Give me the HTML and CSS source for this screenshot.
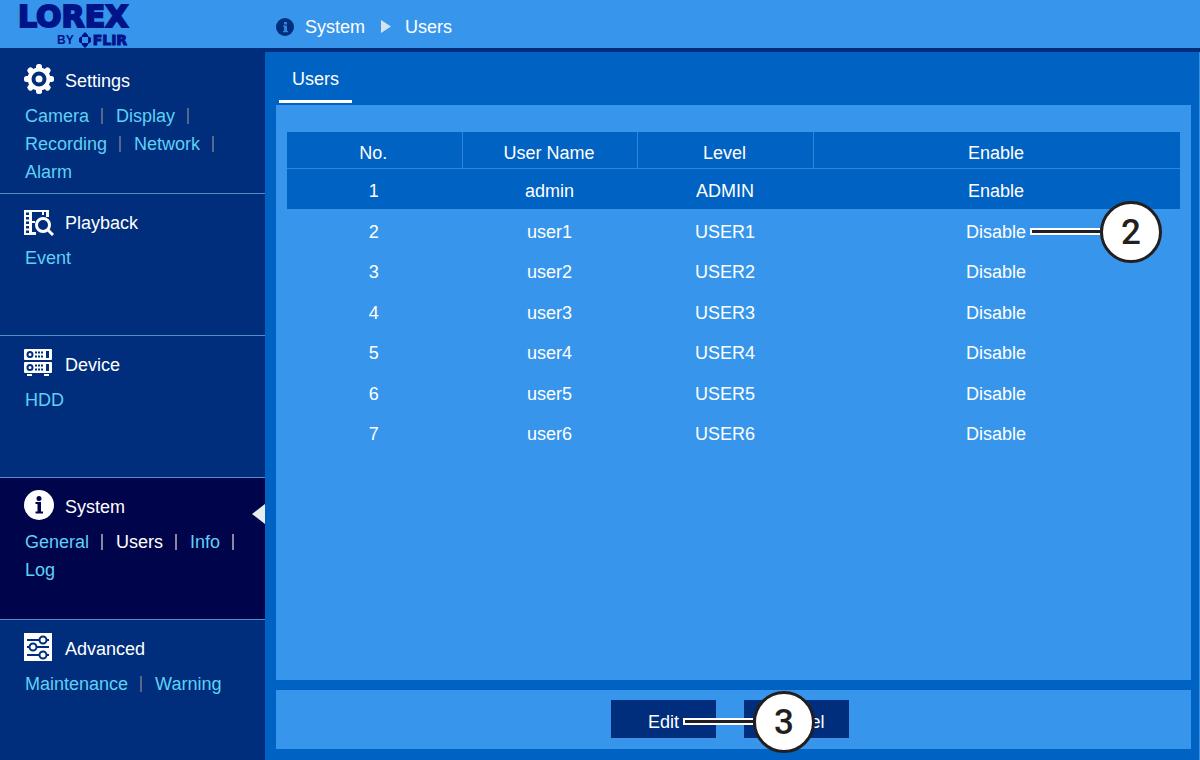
FILE: index.html
```html
<!DOCTYPE html>
<html lang="en">
<head>
  <meta charset="utf-8">
  <title>System - Users</title>
  <link rel="stylesheet" href="styles.css">
</head>
<body>
  <header class="topbar">
    <div class="logo">
      <div class="logo-name">LOREX</div>
      <div class="logo-by">
        <span class="by">BY</span>
        <svg width="12" height="16" viewBox="0 0 12 16">
          <path fill="#00148a" d="M6 0L9 3V5H3V3ZM6 16L3 13V11H9V13ZM0 6L3 4V12L0 10ZM12 6L9 4V12L12 10Z"/>
          <circle cx="6" cy="8" r="3" fill="#3796ec"/>
        </svg>
        <span class="flir">FLIR</span>
      </div>
    </div>
    <div class="crumbs">
      <svg width="18" height="18" viewBox="0 0 18 18">
        <circle cx="9" cy="9" r="9" fill="#002e7c"/>
        <path fill="#2f86dc" d="M8 4h3v2.500H8zM7 7.500h4V13h1v1.200H7V13h1V8.700H7z"/>
      </svg>
      <a href="#">System</a>
      <svg class="crumb-arrow" width="10" height="13" viewBox="0 0 10 13">
        <path fill="#d5e2ee" d="M0 0L10 6.500L0 13z"/>
      </svg>
      <a href="#">Users</a>
    </div>
  </header>

  <div class="layout">
    <nav class="sidebar">
      <section class="menu">
        <h2 class="menu-title">
          <svg width="30" height="30" viewBox="0 0 30 30">
            <g fill="#fff">
              <circle cx="15" cy="15" r="11.500"/>
              <g id="teeth">
                <rect x="12" y="0" width="6" height="30" rx="2.500"/>
                <rect x="0" y="12" width="30" height="6" rx="2.500"/>
              </g>
              <use href="#teeth" transform="rotate(45 15 15)"/>
            </g>
            <circle cx="15" cy="15" r="5.500" fill="none" stroke="#002e7c" stroke-width="4"/>
          </svg>
          <span>Settings</span>
        </h2>
        <ul class="links">
          <li><a href="#">Camera</a></li>
          <li><a href="#">Display</a></li>
          <li><a href="#">Recording</a></li>
          <li><a href="#">Network</a></li>
          <li><a href="#">Alarm</a></li>
        </ul>
      </section>

      <section class="menu">
        <h2 class="menu-title">
          <svg width="30" height="30" viewBox="0 0 30 30">
            <path fill="#fff" d="M0 4H25V11H22V6H8V15H11V17H8V26H12V29H0z"/>
            <path fill="#002e7c" d="M2 6.500h3v2.500H2zM2 11h3v2.500H2zM2 15.500h3V18H2zM2 20h3v2.500H2zM2 24.500h3V27H2z"/>
            <path fill="#fff" d="M18 6h2v3h-2z"/>
            <circle cx="19" cy="19" r="6.500" fill="#002e7c" stroke="#fff" stroke-width="3"/>
            <path d="M24 24L29 29" stroke="#fff" stroke-width="3"/>
          </svg>
          <span>Playback</span>
        </h2>
        <ul class="links">
          <li><a href="#">Event</a></li>
        </ul>
      </section>

      <section class="menu">
        <h2 class="menu-title">
          <svg width="30" height="30" viewBox="0 0 30 30">
            <g id="rack">
              <rect x="0" y="1" width="28" height="11" rx="1" fill="#fff"/>
              <circle cx="6" cy="6.500" r="2.500" fill="none" stroke="#002e7c" stroke-width="2"/>
              <path d="M11 4.500h9M11 8.500h9" stroke="#002e7c" stroke-width="2" stroke-dasharray="2 1"/>
              <rect x="22" y="3" width="3" height="7" fill="#002e7c"/>
            </g>
            <use href="#rack" y="13"/>
            <path fill="#fff" d="M3 26h5v2H3zM20 26h5v2h-5z"/>
          </svg>
          <span>Device</span>
        </h2>
        <ul class="links">
          <li><a href="#">HDD</a></li>
        </ul>
      </section>

      <section class="menu active">
        <h2 class="menu-title">
          <svg width="30" height="30" viewBox="0 0 30 30">
            <circle cx="15" cy="15" r="15" fill="#fff"/>
            <circle cx="15" cy="8.500" r="2.500" fill="#00044a"/>
            <path fill="#00044a" d="M11.500 12H17v9.500h2V23.500h-7.500v-2h2v-7.500h-2z"/>
          </svg>
          <span>System</span>
        </h2>
        <ul class="links">
          <li><a href="#">General</a></li>
          <li><a class="current" href="#">Users</a></li>
          <li><a href="#">Info</a></li>
          <li><a href="#">Log</a></li>
        </ul>
      </section>

      <section class="menu">
        <h2 class="menu-title">
          <svg width="30" height="30" viewBox="0 0 30 30">
            <rect x="0" y="1" width="28" height="28" fill="#fff"/>
            <g stroke="#002e7c" stroke-width="2" fill="#fff">
              <path d="M3 8h22M3 15h22M3 23h22"/>
              <circle cx="19" cy="8" r="3.500"/>
              <circle cx="9" cy="15" r="3.500"/>
              <circle cx="19" cy="23" r="3.500"/>
            </g>
          </svg>
          <span>Advanced</span>
        </h2>
        <ul class="links">
          <li><a href="#">Maintenance</a></li>
          <li><a href="#">Warning</a></li>
        </ul>
      </section>
    </nav>

    <main class="content">
      <div class="tabs">
        <a class="tab" href="#">Users</a>
      </div>

      <div class="panel users">
        <table class="user-table">
          <thead>
            <tr><th>No.</th><th>User Name</th><th>Level</th><th class="wide">Enable</th></tr>
          </thead>
          <tbody>
            <tr class="selected"><td>1</td><td>admin</td><td>ADMIN</td><td>Enable</td></tr>
            <tr><td>2</td><td>user1</td><td>USER1</td><td><span class="marked">Disable<span class="callout"><b>2</b></span></span></td></tr>
            <tr><td>3</td><td>user2</td><td>USER2</td><td>Disable</td></tr>
            <tr><td>4</td><td>user3</td><td>USER3</td><td>Disable</td></tr>
            <tr><td>5</td><td>user4</td><td>USER4</td><td>Disable</td></tr>
            <tr><td>6</td><td>user5</td><td>USER5</td><td>Disable</td></tr>
            <tr><td>7</td><td>user6</td><td>USER6</td><td>Disable</td></tr>
          </tbody>
        </table>
      </div>

      <div class="panel actions">
        <button type="button"><span class="marked">Edit<span class="callout"><b>3</b></span></span></button>
        <button type="button">Cancel</button>
      </div>
    </main>
  </div>
</body>
</html>
```
FILE: styles.css
```css
*,
*::before,
*::after {
  box-sizing: border-box;
}

body {
  margin: 0;
  min-height: 100vh;
  display: flex;
  flex-direction: column;
  font-family: "Liberation Sans", Arial, sans-serif;
  font-size: 18px;
  line-height: 28px;
  color: #fff;
  background: #0062c2;
}

a {
  color: inherit;
  text-decoration: none;
}

/* top bar */
.topbar {
  display: flex;
  height: 52px;
  background: #3796ec;
  border-bottom: 4px solid #002e7c;
}

.logo {
  width: 276px;
  padding: 5px 0 0 18px;
  color: #00148a;
  font-family: "DejaVu Sans", sans-serif;
  font-weight: bold;
}

.logo-name {
  font-size: 30px;
  line-height: 24px;
  -webkit-text-stroke: 2px #00148a;
}

.logo-by {
  display: flex;
  align-items: center;
  gap: 2px;
  height: 16px;
  padding-left: 39px;
  margin-top: 3px;
}

.by {
  padding-right: 3px;
  font-family: "Liberation Sans", Arial, sans-serif;
  font-size: 12px;
}

.flir {
  font-size: 14px;
  -webkit-text-stroke: 1px #00148a;
}

.crumbs {
  display: flex;
  align-items: center;
  gap: 11px;
  padding-top: 5px;
}

.crumb-arrow {
  margin: 0 3px 0 5px;
}

/* sidebar */
.layout {
  flex: 1;
  display: flex;
}

.sidebar {
  width: 265px;
  background: #002e7c;
}

.menu {
  position: relative;
  min-height: 142px;
  padding: 12px 12px 0 24px;
  border-bottom: 1px solid #4f8fc4;
}

.menu:last-child {
  min-height: 140px;
  border-bottom: 0;
}

.menu-title {
  display: flex;
  gap: 11px;
  height: 30px;
  margin: 0 0 8px;
  font-size: 18px;
  font-weight: normal;
}

.menu-title span {
  padding-top: 3px;
}

.links {
  display: flex;
  flex-wrap: wrap;
  column-gap: 13px;
  margin: 0;
  padding: 0 0 0 1px;
  list-style: none;
  color: #5fd0f5;
}

.links li {
  display: flex;
  align-items: center;
}

.links li:not(:last-child)::after {
  content: "";
  width: 2px;
  height: 16px;
  margin-left: 12px;
  background: #56698c;
}

.active {
  background: #00044a;
}

.active .links li:not(:last-child)::after {
  background: #8d86a0;
}

.active::after {
  content: "";
  position: absolute;
  right: 0;
  top: 26px;
  border: 10px solid transparent;
  border-right: 13px solid #e6eef0;
  border-left: 0;
}

.current {
  color: #fff;
}

/* content */
.content {
  flex: 1;
  display: flex;
  flex-direction: column;
  padding: 0 8px 11px 11px;
  border-right: 1px solid #3b8fe0;
}

.tabs {
  display: flex;
  height: 53px;
  padding: 13px 3px 2px;
}

.tab {
  padding: 0 13px;
  border-bottom: 3px solid #fff;
}

.panel {
  background: #3796ec;
}

.users {
  flex: 1;
  padding: 27px 11px;
}

.user-table {
  width: 100%;
  table-layout: fixed;
  border-collapse: separate;
  border-spacing: 0;
  text-align: center;
}

.user-table th {
  height: 37px;
  padding: 5px 2px 0 0;
  font-weight: normal;
  background: #0062c2;
  border-right: 1px solid #2f86dc;
  border-bottom: 1px solid #2f86dc;
}

.user-table .wide {
  width: 41%;
  border-right: 0;
}

.user-table td {
  height: 40px;
  padding: 4px 2px 0 0;
}

.user-table tr:nth-child(even) td {
  height: 41px;
}

.selected {
  background: #0062c2;
}

.actions {
  display: flex;
  justify-content: center;
  gap: 28px;
  margin-top: 10px;
  padding: 10px 7px 11px 0;
}

.actions button {
  width: 105px;
  height: 38px;
  padding: 5px 0 0;
  border: 0;
  font: inherit;
  color: #fff;
  background: #002e7c;
}

/* numbered callouts */
.marked {
  position: relative;
}

.callout {
  position: absolute;
  z-index: 1;
  left: 100%;
  top: 50%;
  display: flex;
  align-items: center;
  margin-left: 4px;
  transform: translateY(-50%);
}

.callout::before {
  content: "";
  width: 70px;
  height: 7px;
  background: #231f20;
  border: 2px solid #fff;
  border-right: 0;
}

.callout b {
  width: 62px;
  height: 62px;
  border: 3px solid #231f20;
  border-radius: 50%;
  background: #fff;
  color: #231f20;
  font: 500 35px/58px Roboto, sans-serif;
  text-align: center;
}
```
